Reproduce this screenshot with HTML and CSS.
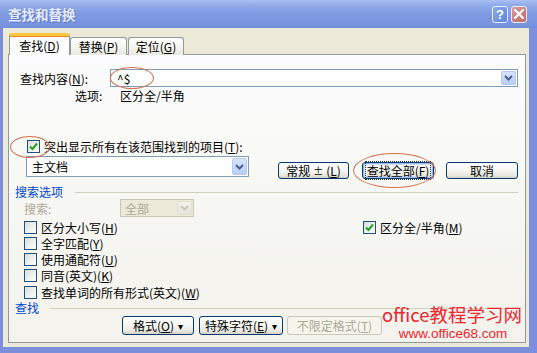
FILE: index.html
```html
<!DOCTYPE html>
<html lang="zh-CN">
<head>
  <meta charset="UTF-8" />
  <title>查找和替换</title>
  <link rel="stylesheet" href="styles.css">
</head>
<body>
  <div class="window">
    <div class="titlebar">
      <span class="title">查找和替换</span>
      <span class="tbtn help">?</span>
      <span class="tbtn close">
        <svg width="10" height="10" viewBox="0 0 10 10"><path d="M1 1L9 9M9 1L1 9" stroke="#fff" stroke-width="2.2" stroke-linecap="square"/></svg>
      </span>
    </div>

    <div class="client">
      <div class="tabs">
        <div class="tab active">查找(<u>D</u>)</div>
        <div class="tab w57">替换(<u>P</u>)</div>
        <div class="tab w56">定位(<u>G</u>)</div>
      </div>

      <div class="panel">
        <div class="row row-find">
          <label class="lbl-find">查找内容(<u>N</u>):</label>
          <div class="combo find-input">
            <span class="combo-text">^$</span>
            <span class="arrow"><svg width="9" height="6" viewBox="0 0 9 6"><path d="M1 1L4.5 4.5L8 1" fill="none" stroke="#4D6185" stroke-width="2"/></svg></span>
          </div>
        </div>

        <div class="row row-opts">
          <span class="lbl-opts">选项:</span>
          <span>区分全/半角</span>
        </div>

        <div class="row row-highlight">
          <span class="cb checked"><svg width="9" height="9" viewBox="0 0 9 9"><path d="M1 4.5L3.5 7L8 1.5" fill="none" stroke="#21A121" stroke-width="2"/></svg></span>
          <span>突出显示所有在该范围找到的项目(<u>T</u>):</span>
        </div>

        <div class="row row-scope">
          <div class="combo scope">
            <span class="combo-text">主文档</span>
            <span class="arrow"><svg width="9" height="6" viewBox="0 0 9 6"><path d="M1 1L4.5 4.5L8 1" fill="none" stroke="#4D6185" stroke-width="2"/></svg></span>
          </div>
          <button class="btn w71 ml29">常规 <span class="more">±</span> (<u>L</u>)</button>
          <button class="btn w72 ml13 focused"><span class="focus-ring">查找全部(<u>F</u>)</span></button>
          <button class="btn w72 ml12">取消</button>
        </div>

        <div class="row section">
          <span class="section-title">搜索选项</span>
          <span class="section-line"></span>
        </div>

        <div class="row row-search">
          <span class="lbl-search">搜索:</span>
          <div class="combo disabled">
            <span class="combo-text">全部</span>
            <span class="arrow"><svg width="9" height="6" viewBox="0 0 9 6"><path d="M1 1L4.5 4.5L8 1" fill="none" stroke="#C9C7BA" stroke-width="2"/></svg></span>
          </div>
        </div>

        <div class="cb-list">
          <div class="cb-row">
            <div class="cb-item left"><span class="cb"></span>区分大小写(<u>H</u>)</div>
            <div class="cb-item"><span class="cb checked"><svg width="9" height="9" viewBox="0 0 9 9"><path d="M1 4.5L3.5 7L8 1.5" fill="none" stroke="#21A121" stroke-width="2"/></svg></span>区分全/半角(<u>M</u>)</div>
          </div>
          <div class="cb-row"><div class="cb-item"><span class="cb"></span>全字匹配(<u>Y</u>)</div></div>
          <div class="cb-row"><div class="cb-item"><span class="cb"></span>使用通配符(<u>U</u>)</div></div>
          <div class="cb-row"><div class="cb-item"><span class="cb"></span>同音(英文)(<u>K</u>)</div></div>
          <div class="cb-row"><div class="cb-item"><span class="cb"></span>查找单词的所有形式(英文)(<u>W</u>)</div></div>
        </div>

        <div class="row section">
          <span class="section-title">查找</span>
          <span class="section-line"></span>
        </div>

        <div class="row row-bottom">
          <button class="btn w72">格式(<u>O</u>) <span class="drop">▾</span></button>
          <button class="btn w84 ml5">特殊字符(<u>E</u>) <span class="drop">▾</span></button>
          <button class="btn w95 ml4 off">不限定格式(<u>T</u>)</button>
        </div>
      </div>
    </div>

    <!-- red marks drawn over the dialog -->
    <span class="ring ring-find"></span>
    <span class="ring ring-check"></span>
    <span class="ring ring-all"></span>

    <div class="watermark">
      <div class="wm-big">office教程学习网</div>
      <div class="wm-small">www.office68.com</div>
    </div>
  </div>
</body>
</html>
```

FILE: styles.css
```css
* {
  box-sizing: border-box;
}

body {
  margin: 0;
  font-family: "Noto Sans CJK SC", "Liberation Sans", sans-serif;
  font-size: 12px;
  color: #000;
}

.window {
  position: relative;
  width: 537px;
  height: 353px;
  display: flex;
  flex-direction: column;
  background: #7B8FDC;
  overflow: hidden;
}

.titlebar {
  height: 28px;
  flex: none;
  display: flex;
  align-items: center;
  padding: 0 10px 0 8px;
  background: linear-gradient(#ABC0F3 0, #91ABEA 18%, #7F9AE2 50%, #7A95E0 85%, #7390DC 100%);
}

.title {
  flex: 1;
  color: #E6ECFB;
  font-weight: bold;
  font-size: 13.5px;
  text-shadow: 1px 1px 0 #6079CC;
}

.tbtn {
  width: 16px;
  height: 17px;
  margin-left: 3px;
  border: 1px solid #E8EEFC;
  border-radius: 3px;
  display: flex;
  align-items: center;
  justify-content: center;
  color: #fff;
  font-family: "Liberation Sans", sans-serif;
  font-weight: bold;
  font-size: 13px;
}

.help {
  background: linear-gradient(135deg, #8EAAEE, #5F84DB);
}

.close {
  background: linear-gradient(135deg, #D99A9A, #BE6A6A);
}

.client {
  flex: 1;
  margin: 0 8px 6px 3px;
  padding: 6px 4px 4px 5px;
  background: #ECE9D8;
  display: flex;
  flex-direction: column;
}

.tabs {
  height: 21px;
  display: flex;
  align-items: flex-end;
  margin-left: 1px;
  margin-bottom: -1px;
  position: relative;
  z-index: 1;
}

.tab {
  height: 18px;
  display: flex;
  align-items: center;
  justify-content: center;
  border: 1px solid #919B9C;
  border-bottom: none;
  border-radius: 3px 3px 0 0;
  background: linear-gradient(#FFFFFF, #F3F3EF 60%, #E9E8E1);
}

.tab.active {
  width: 61px;
  height: 22px;
  border-top: 3px solid #FFC83C;
  background: #FCFCFE;
  box-shadow: inset 0 1px 0 #E68B2C;
}

.w57 {
  width: 57px;
}

.w56 {
  width: 56px;
  margin-left: 1px;
}

.panel {
  width: 518px;
  height: 289px;
  border: 1px solid #919B9C;
  background: linear-gradient(#FCFCFE, #F8F8F5 40%, #F3F2EC);
  display: flex;
  flex-direction: column;
}

.row {
  display: flex;
  align-items: center;
}

.row-find {
  margin-top: 14px;
  height: 18px;
  padding-left: 11px;
}

.lbl-find {
  width: 90px;
}

.combo {
  flex: none;
  height: 18px;
  border: 1px solid #7F9DB9;
  background: #fff;
  display: flex;
  align-items: center;
  padding: 0 1px 0 4px;
}

.combo-text {
  flex: 1;
}

.arrow {
  width: 15px;
  height: 14px;
  border: 1px solid #B6C8F4;
  border-radius: 2px;
  background: linear-gradient(#D7E3FD, #B9CDF8);
  display: flex;
  align-items: center;
  justify-content: center;
}

.find-input {
  width: 408px;
  padding-left: 6px;
}

.row-opts {
  height: 14px;
  margin-top: 1px;
  padding-left: 66px;
}

.lbl-opts {
  width: 45px;
}

.row-highlight {
  height: 14px;
  margin-top: 37px;
  padding-left: 18px;
}

.cb {
  width: 13px;
  height: 13px;
  flex: none;
  margin-right: 4px;
  border: 1px solid #1C5180;
  background: linear-gradient(135deg, #DCDCD7, #FFFFFF);
  display: flex;
  align-items: center;
  justify-content: center;
}

.row-scope {
  height: 23px;
  margin-top: 3px;
  padding-left: 17px;
  align-items: flex-start;
}

.combo.scope {
  width: 223px;
  height: 21px;
  padding-left: 5px;
}

.scope .arrow {
  height: 17px;
}

.btn {
  flex: none;
  height: 17px;
  margin: 0;
  padding: 0;
  border: 1px solid #003C74;
  border-radius: 3px;
  background: linear-gradient(#FFFFFF, #F4F4F0 55%, #E6E4DC 85%, #D6D0C5);
  font: inherit;
  color: #000;
  display: flex;
  align-items: center;
  justify-content: center;
}

.row-scope .btn {
  margin-top: 6px;
}

.btn.focused {
  box-shadow: inset 0 0 0 1px #9DBBF0, inset 0 0 0 2px #CEDCF8;
}

.focus-ring {
  outline: 1px dotted #333;
  padding: 0 1px;
}

.more {
  font-size: 10px;
  margin: 0 3px;
}

.w71 { width: 71px; }
.w72 { width: 72px; }
.w84 { width: 84px; }
.w95 { width: 95px; }
.ml29 { margin-left: 29px; }
.ml13 { margin-left: 13px; }
.ml12 { margin-left: 12px; }
.ml5 { margin-left: 5px; }
.ml4 { margin-left: 4px; }

.section {
  height: 14px;
  margin-top: 5px;
  padding-left: 6px;
  padding-right: 7px;
}

.section-title {
  color: #0046D5;
}

.section-line {
  flex: 1;
  height: 1px;
  margin-left: 12px;
  margin-top: 2px;
  background: #D0D0BF;
}

.row-search {
  height: 18px;
  margin-top: 1px;
  padding-left: 15px;
  color: #ACA899;
}

.lbl-search {
  width: 96px;
}

.combo.disabled {
  width: 74px;
  border-color: #C9C7BA;
  background: #ECE9D8;
  color: #ACA899;
}

.combo.disabled .arrow {
  border-color: #E2DFD3;
  background: linear-gradient(#F3F2EC, #E6E4DA);
}

.cb-list {
  margin-top: 2px;
  padding-left: 15px;
}

.cb-row {
  height: 16.25px;
  display: flex;
  align-items: center;
}

.cb-item {
  display: flex;
  align-items: center;
}

.cb-item.left {
  width: 339px;
}

.cb-list + .section {
  margin-top: 0;
}

.cb-list + .section .section-line {
  margin-left: 11px;
}

.row-bottom {
  margin-top: 2px;
  padding-left: 113px;
}

.row-bottom .btn {
  height: 19px;
}

.drop {
  font-size: 10px;
  margin-left: 4px;
}

.btn.off {
  border-color: #C9C7BA;
  background: #F5F4EA;
  color: #ACA899;
}

.ring {
  position: absolute;
  border: 1px solid #D9704C;
  border-radius: 50%;
}

.ring-find {
  left: 110px;
  top: 67px;
  width: 44px;
  height: 22px;
}

.ring-check {
  left: 10px;
  top: 136px;
  width: 40px;
  height: 22px;
}

.ring-all {
  left: 353px;
  top: 153px;
  width: 83px;
  height: 35px;
}

.watermark {
  position: absolute;
  left: 382px;
  top: 302px;
  color: #F0262E;
  text-align: center;
}

.wm-big {
  font-size: 18.5px;
  line-height: 24px;
}

.wm-small {
  font-family: "Liberation Sans", sans-serif;
  font-size: 13.5px;
  line-height: 16px;
  margin-left: 2px;
}
```
